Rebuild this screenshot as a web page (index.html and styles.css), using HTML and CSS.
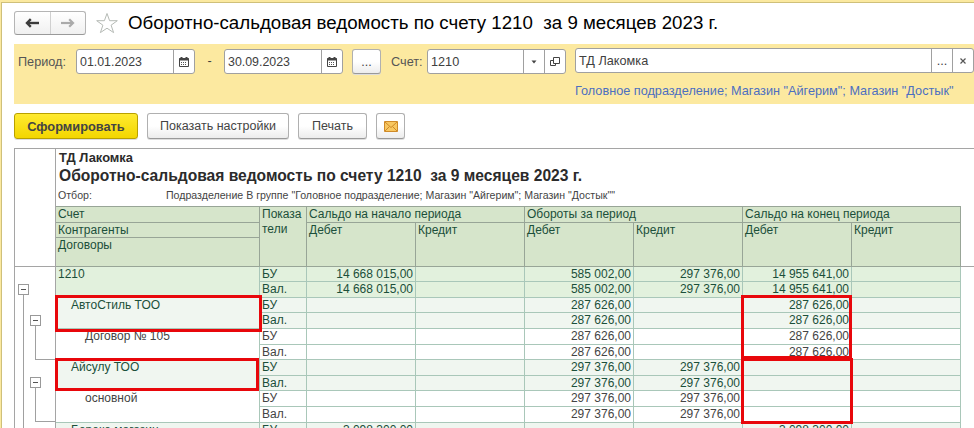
FILE: index.html
```html
<!DOCTYPE html>
<html lang="ru">
<head>
  <meta charset="utf-8">
  <title>Оборотно-сальдовая ведомость</title>
  <link rel="stylesheet" href="styles.css">
</head>
<body>
  <div class="window">
    <div class="title-bar">
      <div class="nav">
        <button class="nav-btn"><svg width="14" height="10" viewBox="0 0 14 10"><path d="M2.500 5H14" stroke="#3c3c3c" stroke-width="2.400"/><path d="M5.800 1.200L2 5l3.800 3.800" fill="none" stroke="#3c3c3c" stroke-width="2.400"/></svg></button>
        <button class="nav-btn"><svg width="14" height="10" viewBox="0 0 14 10"><path d="M0 5h11.500" stroke="#aaa" stroke-width="2.200"/><path d="M8.200 1.200L12 5 8.200 8.800" fill="none" stroke="#aaa" stroke-width="2.200"/></svg></button>
      </div>
      <svg class="star" width="24" height="22" viewBox="0 0 24 22"><path d="M12 1.500l2.600 7.200h7.700l-6.200 4.500 2.500 7.400L12 16.200l-6.600 4.400 2.500-7.400L1.700 8.700h7.700z" fill="#fff" stroke="#b5bab5" stroke-width="1"/></svg>
      <h1>Оборотно-сальдовая ведомость по счету 1210  за 9 месяцев 2023 г.</h1>
    </div>

    <div class="filters">
      <label class="period">Период:</label>
      <div class="field date">
        <span class="value">01.01.2023</span>
        <span class="addon"><svg width="10" height="10" viewBox="0 0 10 10"><path d="M.5 1.500h9v8h-9z" fill="#fff" stroke="#444"/><path d="M0 2.500h10M2.500 0v2M7.500 0v2" stroke="#444" stroke-width="2"/><path d="M2 5.500h6M2 7.500h6" stroke="#555" stroke-dasharray="1 1"/></svg></span>
      </div>
      <span class="dash">-</span>
      <div class="field date">
        <span class="value">30.09.2023</span>
        <span class="addon"><svg width="10" height="10" viewBox="0 0 10 10"><path d="M.5 1.500h9v8h-9z" fill="#fff" stroke="#444"/><path d="M0 2.500h10M2.500 0v2M7.500 0v2" stroke="#444" stroke-width="2"/><path d="M2 5.500h6M2 7.500h6" stroke="#555" stroke-dasharray="1 1"/></svg></span>
      </div>
      <button class="btn dots">...</button>
      <label class="account-label">Счет:</label>
      <div class="field account">
        <span class="value">1210</span>
        <span class="addon"><svg width="6" height="4" viewBox="0 0 6 4"><path d="M.5 .5h5L3 3.500z" fill="#444"/></svg></span>
        <span class="addon"><svg width="10" height="10" viewBox="0 0 10 10"><path d="M3.500 .5h6v6h-6zM3.500 3.500h-3v5h5v-2" fill="none" stroke="#444"/></svg></span>
      </div>
      <div class="org-box">
        <div class="field org">
          <span class="value">ТД Лакомка</span>
          <span class="addon low">...</span>
          <span class="addon"><svg width="6" height="6" viewBox="0 0 6 6"><path d="M.5 .5l5 5M5.500 .5l-5 5" stroke="#555" stroke-width="1.200"/></svg></span>
        </div>
        <a class="link">Головное подразделение; Магазин "Айгерим"; Магазин "Достык"</a>
      </div>
    </div>

    <div class="commands">
      <button class="btn main">Сформировать</button>
      <button class="btn settings">Показать настройки</button>
      <button class="btn print">Печать</button>
      <button class="btn mail"><svg width="14" height="11" viewBox="0 0 14 11"><path d="M.5 .5h13v10H.5z" fill="#f8c760" stroke="#cf8a28"/><path d="M1 1l6 5.500L13 1M1 10l4.500-4.500M13 10L8.500 5.500" fill="none" stroke="#cf8a28"/></svg></button>
    </div>

    <div class="report">
      <div class="tree">
        <div class="node level1"></div>
        <div class="node level2 first"></div>
        <div class="node level2 second"></div>
      </div>
      <div class="sheet">
        <div class="head">
          <div class="company">ТД Лакомка</div>
          <div class="name">Оборотно-сальдовая ведомость по счету 1210  за 9 месяцев 2023 г.</div>
          <div class="selection"><span>Отбор:</span><span>Подразделение В группе "Головное подразделение; Магазин "Айгерим"; Магазин "Достык""</span></div>
        </div>
        <div class="grid header">
          <div class="c1 r1">Счет</div>
          <div class="c1 r2">Контрагенты</div>
          <div class="c1 r3">Договоры</div>
          <div class="ind">Показа<br>тели</div>
          <div class="group g1">Сальдо на начало периода</div>
          <div class="group g2">Обороты за период</div>
          <div class="group g3">Сальдо на конец периода</div>
          <div class="sub s1">Дебет</div><div class="sub">Кредит</div>
          <div class="sub">Дебет</div><div class="sub">Кредит</div>
          <div class="sub">Дебет</div><div class="sub">Кредит</div>
        </div>
        <div class="grid rows total">
          <div class="acc">1210</div>
          <div>БУ</div><div>14 668 015,00</div><div></div><div>585 002,00</div><div>297 376,00</div><div>14 955 641,00</div><div></div>
          <div>Вал.</div><div>14 668 015,00</div><div></div><div>585 002,00</div><div>297 376,00</div><div>14 955 641,00</div><div></div>
        </div>
        <div class="grid rows partner">
          <div class="acc">АвтоСтиль ТОО</div>
          <div>БУ</div><div></div><div></div><div>287 626,00</div><div></div><div>287 626,00</div><div></div>
          <div>Вал.</div><div></div><div></div><div>287 626,00</div><div></div><div>287 626,00</div><div></div>
        </div>
        <div class="grid rows contract">
          <div class="acc">Договор № 105</div>
          <div>БУ</div><div></div><div></div><div>287 626,00</div><div></div><div>287 626,00</div><div></div>
          <div>Вал.</div><div></div><div></div><div>287 626,00</div><div></div><div>287 626,00</div><div></div>
        </div>
        <div class="grid rows partner">
          <div class="acc">Айсулу ТОО</div>
          <div>БУ</div><div></div><div></div><div>297 376,00</div><div>297 376,00</div><div></div><div></div>
          <div>Вал.</div><div></div><div></div><div>297 376,00</div><div>297 376,00</div><div></div><div></div>
        </div>
        <div class="grid rows contract">
          <div class="acc">основной</div>
          <div>БУ</div><div></div><div></div><div>297 376,00</div><div>297 376,00</div><div></div><div></div>
          <div>Вал.</div><div></div><div></div><div>297 376,00</div><div>297 376,00</div><div></div><div></div>
        </div>
        <div class="grid rows partner">
          <div class="acc">Береке магазин</div>
          <div>БУ</div><div>3 098 300,00</div><div></div><div></div><div></div><div>3 098 300,00</div><div></div>
        </div>
      </div>
      <div class="mark m1"></div>
      <div class="mark m2"></div>
      <div class="mark m3"></div>
      <div class="mark m4"></div>
    </div>
  </div>
</body>
</html>
```

FILE: styles.css
```css
* {
  box-sizing: border-box;
}

body {
  margin: 0;
  height: 428px;
  overflow: hidden;
  background: #fff;
  color: #404040;
  font-family: "Liberation Sans", Arial, sans-serif;
  font-size: 12.7px;
}

.window {
  height: 428px;
  overflow: hidden;
  border-top: 2px solid #fbe9a0;
  border-left: 1px solid #fbe9a0;
  box-shadow: inset 1px 1px 0 #cfc07a;
  padding-left: 13px;
}

.title-bar {
  display: flex;
  align-items: flex-start;
  height: 42px;
  padding-top: 9px;
}

.nav {
  display: flex;
  width: 72px;
  height: 24px;
  border: 1px solid #b5b5b5;
  border-bottom-color: #999;
  border-radius: 3px;
  background: linear-gradient(#fff, #f0f0f0);
}

.nav-btn {
  display: flex;
  flex: 1;
  align-items: center;
  justify-content: center;
  padding: 0;
  border: 0;
  background: none;
}

.nav-btn + .nav-btn {
  border-left: 1px solid #d0d0d0;
}

.star {
  margin: 1px 0 0 9px;
}

h1 {
  margin: 1px 0 0 9px;
  color: #000;
  font-size: 18.7px;
  font-weight: normal;
  line-height: 22px;
  white-space: pre;
}

.filters {
  display: flex;
  align-items: flex-start;
  height: 60px;
  padding: 5px 0 0 4px;
  background: #fce9a0;
}

.filters label {
  line-height: 26px;
  white-space: nowrap;
  color: #555;
}

.period {
  width: 58px;
}

.field {
  display: flex;
  height: 25px;
  border: 1px solid #a0a0a0;
  border-radius: 3px;
  background: #fff;
}

.date {
  width: 119px;
}

.value {
  flex: 1;
  padding-left: 3px;
  line-height: 24px;
}

.date .value {
  font-size: 12.4px;
}

.addon {
  display: flex;
  width: 21px;
  align-items: center;
  justify-content: center;
  border-left: 1px solid #a0a0a0;
}

.low {
  padding-top: 1px;
}

.dash {
  width: 29px;
  line-height: 25px;
  text-align: center;
}

.btn {
  display: flex;
  height: 26px;
  padding: 0;
  align-items: center;
  justify-content: center;
  border: 1px solid #b0b0b0;
  border-bottom-color: #999;
  border-radius: 3px;
  background: linear-gradient(#fff, #fff 50%, #ececec);
  box-shadow: 0 1px 0 #ddd;
  color: #444;
  font: 12.5px "Liberation Sans", Arial, sans-serif;
  white-space: nowrap;
}

.dots {
  width: 29px;
  height: 25px;
  margin-left: 9px;
}

.account-label {
  width: 36px;
  margin-left: 10px;
}

.account {
  width: 139px;
}

.org-box {
  flex: 1;
  margin-left: 9px;
}

.org {
  margin-top: -1px;
}

.link {
  display: block;
  color: #4c6fc0;
  line-height: 16px;
  margin-top: 10px;
  white-space: nowrap;
}

.commands {
  display: flex;
  gap: 9px;
  height: 44px;
  padding-top: 9px;
}

.main {
  width: 124px;
  border-color: #b8a000;
  background: linear-gradient(#ffea30, #f3d600);
  font-size: 12.8px;
  font-weight: bold;
}

.settings {
  width: 142px;
}

.print {
  width: 69px;
}

.mail {
  width: 29px;
}

.report {
  position: relative;
  display: flex;
  height: 290px;
  border-top: 1px solid #a5a5a5;
  border-left: 1px solid #a5a5a5;
  font-size: 12px;
}

.tree {
  position: relative;
  width: 40px;
  background: linear-gradient(#a5a5a5, #a5a5a5) 0 117px / 100% 1px no-repeat;
}

.node {
  position: absolute;
  border-left: 1px solid #a0a0a0;
}

.node::before {
  content: "";
  position: absolute;
  left: -6px;
  top: -10px;
  width: 9px;
  height: 9px;
  border: 1px solid #999;
  background: linear-gradient(#555, #555) center / 5px 1px no-repeat #fff;
}

.level1 {
  left: 8px;
  top: 145px;
  height: 150px;
}

.level2 {
  left: 20px;
  width: 20px;
  border-bottom: 1px solid #a0a0a0;
}

.first {
  top: 176px;
  height: 35px;
}

.second {
  top: 238px;
  height: 35px;
}

.sheet {
  flex: 1;
  border-left: 1px solid #a5a5a5;
  background: linear-gradient(#a5a5a5, #a5a5a5) 0 117px / 100% 1px no-repeat;
}

.head {
  height: 57px;
  color: #2b2b2b;
}

.company {
  padding: 1px 0 0 3px;
  font-size: 12.9px;
  font-weight: bold;
  line-height: 16px;
}

.name {
  padding-left: 3px;
  font-size: 15.6px;
  font-weight: bold;
  line-height: 20px;
  white-space: pre;
}

.selection {
  display: flex;
  padding-left: 2px;
  font-size: 10.6px;
  line-height: 19px;
  color: #444;
  white-space: nowrap;
}

.selection span:first-child {
  width: 108px;
}

.grid {
  display: grid;
  grid-template-columns: 204px 47px repeat(6, 109px);
  width: 905px;
  color: #1b4f3a;
}

.header {
  grid-template-rows: 15.5px 15.5px 27.7px;
  background: #d6e5cb;
  border-top: 1px solid #98a597;
  border-bottom: 1px solid #98a597;
  line-height: 15px;
}

.header > div {
  padding-left: 2px;
  border-right: 1px solid #98a597;
  border-bottom: 1px solid #98a597;
}

.header .r3,
.header .ind,
.header .sub {
  border-bottom: 0;
}

.c1 {
  grid-column: 1;
}

.r1 {
  grid-row: 1;
}

.r2 {
  grid-row: 2;
}

.r3 {
  grid-row: 3;
}

.ind {
  grid-column: 2;
  grid-row: 1 / 4;
}

.group {
  grid-row: 1;
}

.g1 {
  grid-column: 3 / 5;
}

.g2 {
  grid-column: 5 / 7;
}

.g3 {
  grid-column: 7 / 9;
}

.sub {
  grid-row: 2 / 4;
}

.s1 {
  grid-column: 3;
}

.rows {
  grid-template-rows: 15.6px 15.6px;
  line-height: 15px;
}

.rows > div {
  padding-left: 2px;
  border-right: 1px solid #a9c7b9;
  border-bottom: 1px solid #a9c7b9;
  white-space: nowrap;
}

.rows > div:nth-child(7n + 3),
.rows > div:nth-child(7n + 4),
.rows > div:nth-child(7n + 5),
.rows > div:nth-child(7n + 6),
.rows > div:nth-child(7n + 7),
.rows > div:nth-child(7n + 8) {
  padding: 0 2px 0 0;
  text-align: right;
}

.rows > .acc {
  grid-row: 1 / 3;
  padding-left: 2px;
  text-align: left;
}

.total {
  background: #e2f1dd;
}

.partner {
  background: #f0f6f0;
}

.partner > .acc {
  padding-left: 15px;
}

.contract {
  color: #444;
}

.contract > .acc {
  padding-left: 29px;
}

/* red frames over the cells */
.mark {
  position: absolute;
  border: 3px solid #e8070b;
}

.m1 {
  left: 40px;
  top: 146px;
  width: 207px;
  height: 37px;
}

.m2 {
  left: 40px;
  top: 209px;
  width: 204px;
  height: 33px;
}

.m3 {
  left: 726px;
  top: 146px;
  width: 111px;
  height: 64px;
}

.m4 {
  left: 726px;
  top: 209px;
  width: 112px;
  height: 66px;
}
```
